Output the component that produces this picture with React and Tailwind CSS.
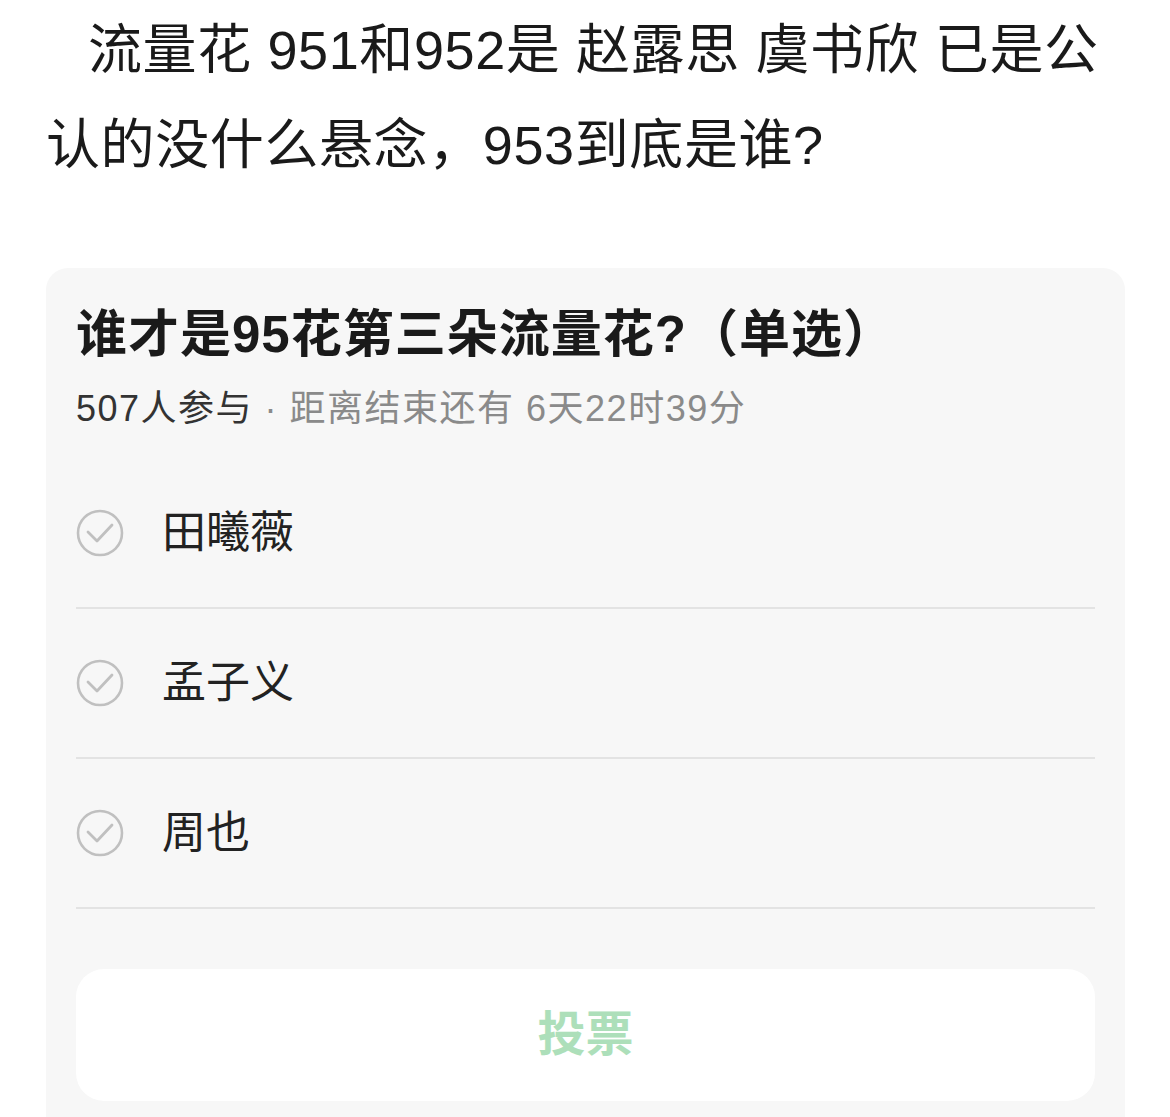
const options = ["田曦薇", "孟子义", "周也"];

function CheckCircle() {
  return (
    <svg width="48" height="48" viewBox="0 0 48 48" fill="none" className="shrink-0">
      <circle cx="24" cy="24" r="22" stroke="#c0c0c0" strokeWidth="2.6" />
      <path d="M12 23 L21 32 L36 16" stroke="#c0c0c0" strokeWidth="2.8" strokeLinecap="round" strokeLinejoin="round" />
    </svg>
  );
}

export default function App() {
  return (
    <div
      className="min-h-screen bg-white text-[#1a1a1a]"
      style={{ fontFamily: '"Liberation Sans", "Noto Sans CJK SC", sans-serif' }}
    >
      <div className="pl-[46px] pr-[30px] pt-[3px]">
        <p className="text-[54px] leading-[95px] tracking-[0.6px] indent-[42px]">
          流量花 951和952是 赵露思 虞书欣 已是公认的没什么悬念，953到底是谁?
        </p>

        <div className="mt-[75px] w-[1079px] bg-[#f7f7f7] rounded-[22px] px-[30px] pt-[37px] pb-[40px]">
          <h2 className="text-[51px] leading-[60px] font-bold tracking-[1px] text-[#1a1a1a]">
            谁才是95花第三朵流量花?（单选）
          </h2>
          <p className="mt-[22px] text-[36px] leading-[44px] tracking-[1.5px]">
            <span className="text-[#333333]">507人参与</span>
            <span className="text-[#8a8a8a]"> · 距离结束还有 6天22时39分</span>
          </p>

          <div className="mt-[28px]">
            {options.map((name) => (
              <div
                key={name}
                className="h-[150px] flex items-center gap-[38px] border-b-2 border-[#e3e3e3]"
              >
                <CheckCircle />
                <span className="text-[44px] text-[#222222]">{name}</span>
              </div>
            ))}
          </div>

          <button className="mt-[60px] w-full h-[132px] bg-white rounded-[28px] flex items-center justify-center">
            <span className="text-[48px] font-bold text-[#addfba]">投票</span>
          </button>
        </div>
      </div>
    </div>
  );
}
